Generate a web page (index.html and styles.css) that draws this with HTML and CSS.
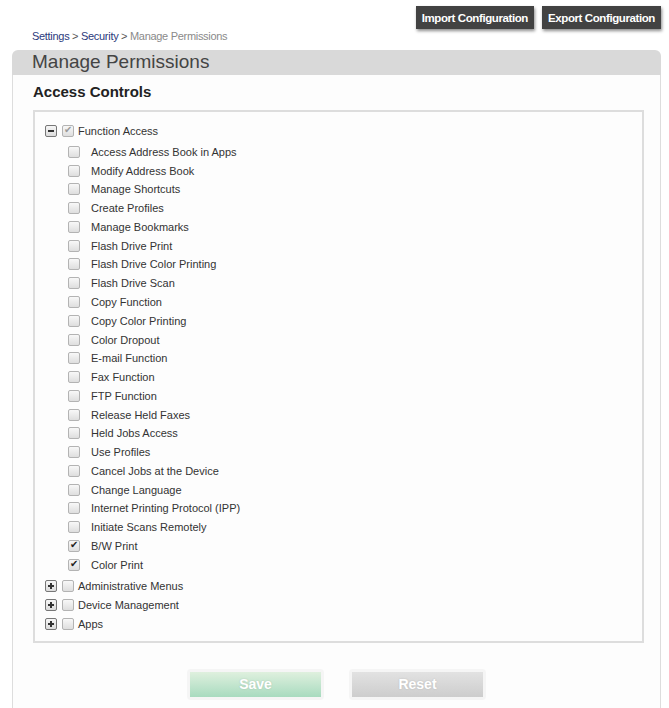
FILE: index.html
```html
<!DOCTYPE html>
<html lang="en">
  <head>
    <meta charset="UTF-8" />
    <title>Manage Permissions</title>
    <link rel="stylesheet" href="styles.css">
  </head>
  <body>
    <div class="topbar">
      <button class="btn-dark">Import Configuration</button>
      <button class="btn-dark">Export Configuration</button>
    </div>
    <div class="breadcrumb">
      <a href="#">Settings</a> &gt; <a href="#">Security</a> &gt; <span>Manage Permissions</span>
    </div>

    <div class="panel">
      <div class="panel-head">Manage Permissions</div>
      <div class="panel-body">
        <h2>Access Controls</h2>
        <div class="tree">
          <div class="node">
            <span class="toggle minus"></span>
            <span class="cb checked disabled"></span>
            <span class="label">Function Access</span>
          </div>
          <ul class="children">
            <li><span class="cb"></span>Access Address Book in Apps</li>
            <li><span class="cb"></span>Modify Address Book</li>
            <li><span class="cb"></span>Manage Shortcuts</li>
            <li><span class="cb"></span>Create Profiles</li>
            <li><span class="cb"></span>Manage Bookmarks</li>
            <li><span class="cb"></span>Flash Drive Print</li>
            <li><span class="cb"></span>Flash Drive Color Printing</li>
            <li><span class="cb"></span>Flash Drive Scan</li>
            <li><span class="cb"></span>Copy Function</li>
            <li><span class="cb"></span>Copy Color Printing</li>
            <li><span class="cb"></span>Color Dropout</li>
            <li><span class="cb"></span>E-mail Function</li>
            <li><span class="cb"></span>Fax Function</li>
            <li><span class="cb"></span>FTP Function</li>
            <li><span class="cb"></span>Release Held Faxes</li>
            <li><span class="cb"></span>Held Jobs Access</li>
            <li><span class="cb"></span>Use Profiles</li>
            <li><span class="cb"></span>Cancel Jobs at the Device</li>
            <li><span class="cb"></span>Change Language</li>
            <li><span class="cb"></span>Internet Printing Protocol (IPP)</li>
            <li><span class="cb"></span>Initiate Scans Remotely</li>
            <li><span class="cb checked"></span>B/W Print</li>
            <li><span class="cb checked"></span>Color Print</li>
          </ul>
          <div class="node">
            <span class="toggle plus"></span>
            <span class="cb"></span>
            <span class="label">Administrative Menus</span>
          </div>
          <div class="node">
            <span class="toggle plus"></span>
            <span class="cb"></span>
            <span class="label">Device Management</span>
          </div>
          <div class="node">
            <span class="toggle plus"></span>
            <span class="cb"></span>
            <span class="label">Apps</span>
          </div>
        </div>

        <div class="actions">
          <span class="ring"><button class="btn-save">Save</button></span>
          <span class="ring"><button class="btn-reset">Reset</button></span>
        </div>
      </div>
    </div>
  </body>
</html>
```

FILE: styles.css
```css
body {
  margin: 0;
  font-family: "Liberation Sans", Arial, sans-serif;
  color: #333;
  background: #fff;
}
.topbar {
  display: flex;
  justify-content: flex-end;
  gap: 8px;
  padding: 6px 8px 0 0;
}
.btn-dark {
  height: 23px;
  padding: 0 6px;
  border: none;
  background: #424242;
  color: #fff;
  font-family: "Liberation Sans", Arial, sans-serif;
  font-size: 11.5px;
  font-weight: bold;
  letter-spacing: -0.4px;
  box-shadow: 1px 2px 3px rgba(0, 0, 0, 0.45);
  cursor: pointer;
}
.breadcrumb {
  margin: 0 0 0 32px;
  height: 14px;
  line-height: 14px;
  font-size: 11px;
  letter-spacing: -0.3px;
  color: #555;
}
.breadcrumb a {
  color: #2b3a7c;
  text-decoration: none;
}
.breadcrumb span {
  color: #8a8a8a;
}
.panel {
  margin: 7px 8px 0 12px;
}
.panel-head {
  height: 25px;
  line-height: 23px;
  padding-left: 20px;
  background: #d9d9d9;
  border-radius: 6px 6px 0 0;
  font-size: 19px;
  color: #444;
}
.panel-body {
  border-left: 1px solid #ddd;
  border-right: 1px solid #ddd;
  background: #fdfdfd;
  padding: 0 16px 12px 20px;
  min-height: 640px;
}
.panel-body h2 {
  margin: 0;
  padding-top: 8px;
  height: 27px;
  line-height: 18px;
  font-size: 15px;
  color: #222;
}
.tree {
  border: 2px solid #ddd;
  padding: 9.5px 0 7.5px 10px;
  font-size: 11px;
  color: #333;
}
.node {
  display: flex;
  align-items: center;
  height: 19px;
}
.toggle {
  position: relative;
  box-sizing: border-box;
  width: 12px;
  height: 12px;
  margin-right: 5px;
  border: 1px solid #777;
  border-radius: 2px;
  background: linear-gradient(#f6f6f6, #dcdcdc);
}
.toggle::before,
.toggle::after {
  content: "";
  position: absolute;
  background: #333;
}
.toggle::before {
  left: 2px;
  top: 4px;
  width: 6px;
  height: 2px;
}
.plus::after {
  left: 4px;
  top: 2px;
  width: 2px;
  height: 6px;
}
.cb {
  position: relative;
  display: inline-block;
  box-sizing: border-box;
  width: 12px;
  height: 12px;
  border: 1px solid #b3b3b3;
  border-radius: 2px;
  background: linear-gradient(#f8f8f8, #dedede);
  flex: none;
}
.cb.checked::after {
  content: "\2714";
  position: absolute;
  left: 1px;
  top: -2px;
  font-size: 10px;
  color: #222;
}
.cb.disabled::after {
  color: #9a9a9a;
}
.node .label {
  margin-left: 4px;
}
.children {
  list-style: none;
  margin: 2px 0;
  padding: 0 0 0 23px;
}
.children li {
  display: flex;
  align-items: center;
  height: 18.77px;
}
.children .cb {
  margin-right: 11px;
}
.actions {
  display: flex;
  justify-content: center;
  gap: 25px;
  margin-top: 26px;
  padding-right: 4px;
}
.ring {
  padding: 3px;
  background: #f5f5f5;
  border-radius: 4px;
}
.btn-save,
.btn-reset {
  display: block;
  width: 131px;
  height: 25px;
  border: none;
  color: #fff;
  font-family: "Liberation Sans", Arial, sans-serif;
  font-size: 14px;
  font-weight: bold;
  text-shadow: 0 0 2px rgba(0, 0, 0, 0.15);
  cursor: pointer;
}
.btn-save {
  background: linear-gradient(#dff0de, #a8dbbf);
}
.btn-reset {
  background: linear-gradient(#e2e2e2, #cdcdcd);
}
```
